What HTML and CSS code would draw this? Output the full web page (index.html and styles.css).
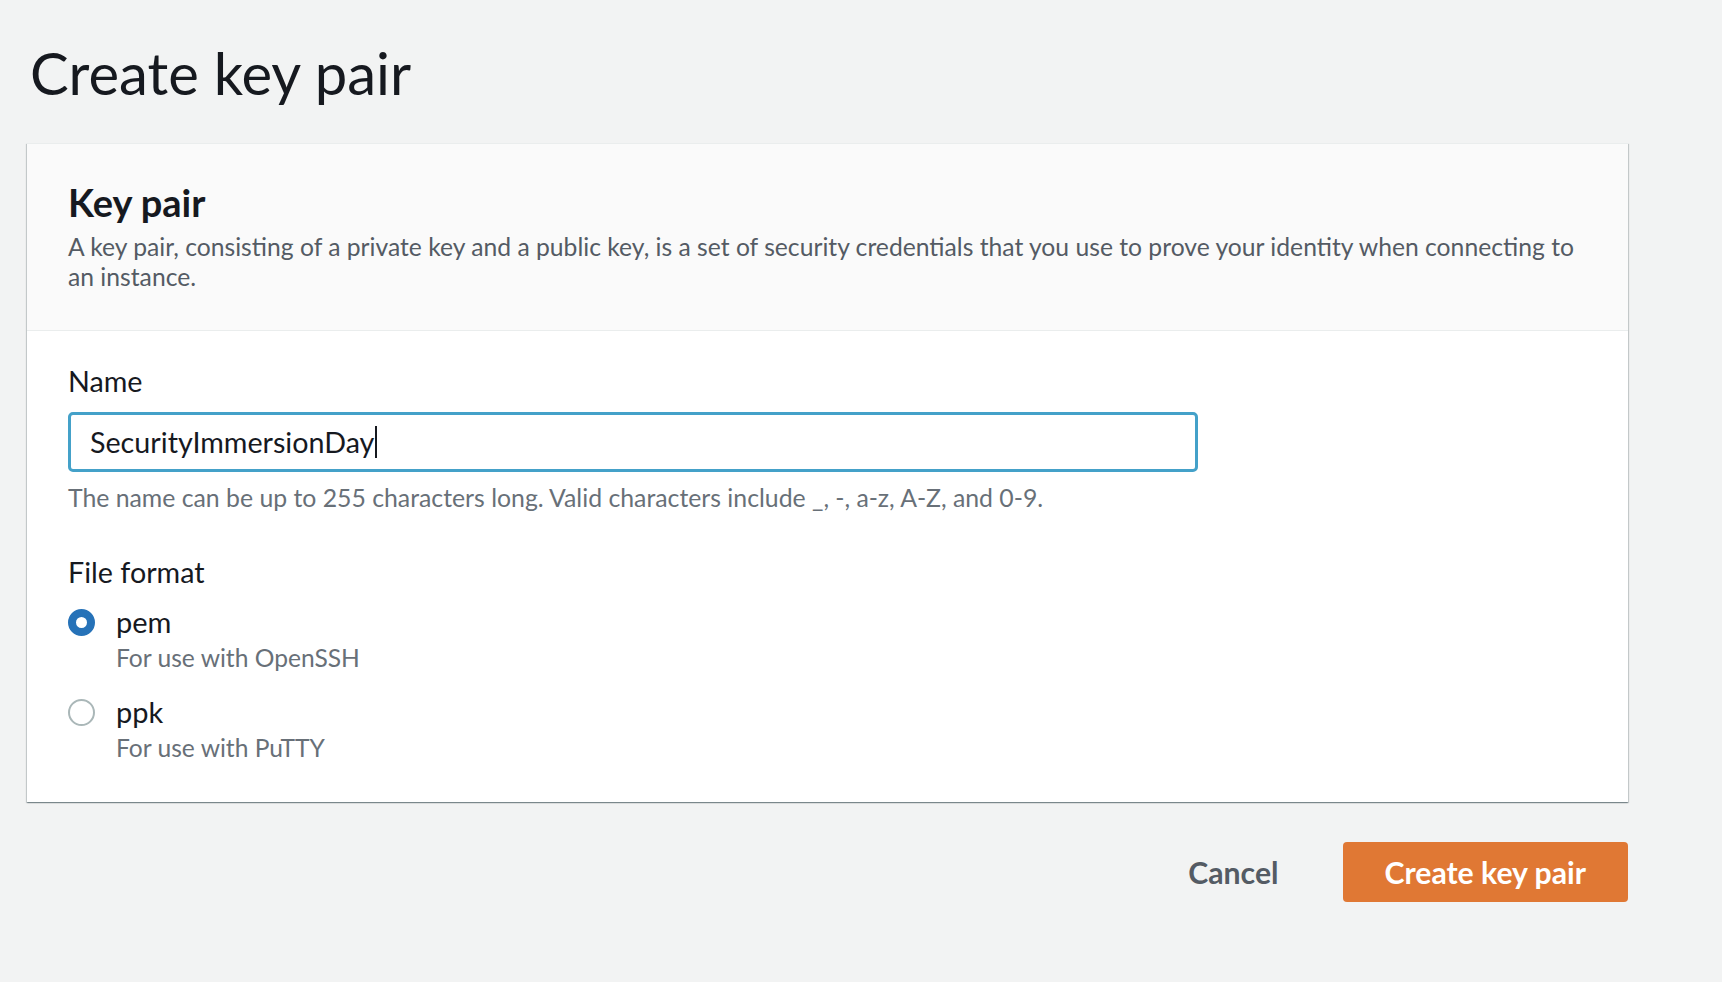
FILE: index.html
```html
<!DOCTYPE html>
<html lang="en">
<head>
<meta charset="utf-8">
<title>Create key pair</title>
<link rel="stylesheet" href="styles.css">
</head>
<body>
<main class="page">
  <h1 class="title">Create key pair</h1>
  <section class="card">
    <header class="card-header">
      <h2 class="card-title">Key pair</h2>
      <p class="card-desc">A key pair, consisting of a private key and a public key, is a set of security credentials that you use to prove your identity when connecting to an instance.</p>
    </header>
    <div class="card-body">
      <div class="field">
        <label class="field-label" for="kp-name">Name</label>
        <div class="input"><span class="input-text">SecurityImmersionDay</span><span class="caret"></span></div>
        <p class="hint">The name can be up to 255 characters long. Valid characters include _, -, a-z, A-Z, and 0-9.</p>
      </div>
      <div class="field field-format">
        <div class="field-label">File format</div>
        <div class="radio-group">
          <div class="radio-option">
            <span class="radio radio-checked"></span>
            <div class="radio-text">
              <div class="radio-label">pem</div>
              <div class="radio-desc">For use with OpenSSH</div>
            </div>
          </div>
          <div class="radio-option">
            <span class="radio"></span>
            <div class="radio-text">
              <div class="radio-label">ppk</div>
              <div class="radio-desc">For use with PuTTY</div>
            </div>
          </div>
        </div>
      </div>
    </div>
  </section>
  <div class="actions">
    <button class="btn btn-link" type="button">Cancel</button>
    <button class="btn btn-primary" type="button">Create key pair</button>
  </div>
</main>
</body>
</html>
```

FILE: styles.css
```css
html, body {
  margin: 0;
  padding: 0;
  background: #f2f3f3;
}

body {
  font-family: "Lato", "Open Sans", sans-serif;
  color: #16191f;
}

.page {
  padding: 38px 94px 0 27px;
}

.title {
  margin: 0 0 35px 3px;
  font-size: 58px;
  line-height: 70px;
  font-weight: 400;
  color: #16191f;
}

.card {
  background: #ffffff;
  border-top: 1px solid #eaeded;
  box-shadow: 0 1px 1px 0 rgba(0, 28, 36, 0.3), 1px 1px 1px 0 rgba(0, 28, 36, 0.15), -1px 1px 1px 0 rgba(0, 28, 36, 0.15);
}

.card-header {
  background: #fafafa;
  border-bottom: 1px solid #eaeded;
  padding: 37px 41px 38px 41px;
}

.card-title {
  margin: 0 0 9px;
  font-size: 38px;
  line-height: 42px;
  font-weight: 700;
  color: #16191f;
}

.card-desc {
  margin: 0;
  font-size: 24.7px;
  line-height: 30px;
  color: #545b64;
}

.card-body {
  padding: 34px 41px 39px 41px;
}

.field-label {
  display: block;
  font-size: 28.7px;
  line-height: 32px;
  color: #16191f;
}

.input {
  margin-top: 15px;
  width: 1130px;
  height: 60px;
  box-sizing: border-box;
  border: 3px solid #44a1c9;
  border-radius: 5px;
  background: #ffffff;
  display: flex;
  align-items: center;
  padding: 0 19px;
  font-size: 28.7px;
  color: #16191f;
}

.caret {
  display: inline-block;
  width: 2px;
  height: 32px;
  background: #16191f;
  margin-left: 1px;
}

.hint {
  margin: 11px 0 0;
  font-size: 24.8px;
  line-height: 30px;
  color: #687078;
}

.field-format {
  margin-top: 43px;
}

.radio-group {
  margin-top: 15px;
  display: flex;
  flex-direction: column;
  gap: 20px;
}

.radio-option {
  display: flex;
  align-items: flex-start;
  gap: 21px;
}

.radio {
  flex: none;
  width: 27px;
  height: 27px;
  margin-top: 6px;
  box-sizing: border-box;
  border-radius: 50%;
  border: 2px solid #aab7b8;
  background: #ffffff;
}

.radio-checked {
  border: 8.5px solid #2672b8;
}

.radio-label {
  font-size: 29px;
  line-height: 37px;
  color: #16191f;
}

.radio-desc {
  margin-top: 3px;
  font-size: 24.6px;
  line-height: 30px;
  color: #687078;
}

.actions {
  display: flex;
  justify-content: flex-end;
  align-items: center;
  margin-top: 40px;
}

.btn {
  font-family: "Lato", "Open Sans", sans-serif;
  font-weight: 700;
  font-size: 30.2px;
  height: 60px;
  border: none;
  border-radius: 4px;
  cursor: pointer;
}

.btn-link {
  background: transparent;
  color: #545b64;
  padding: 0 32px;
  margin-right: 32px;
}

.btn-primary {
  background: #e07834;
  color: #ffffff;
  padding: 0 42px;
}
```
